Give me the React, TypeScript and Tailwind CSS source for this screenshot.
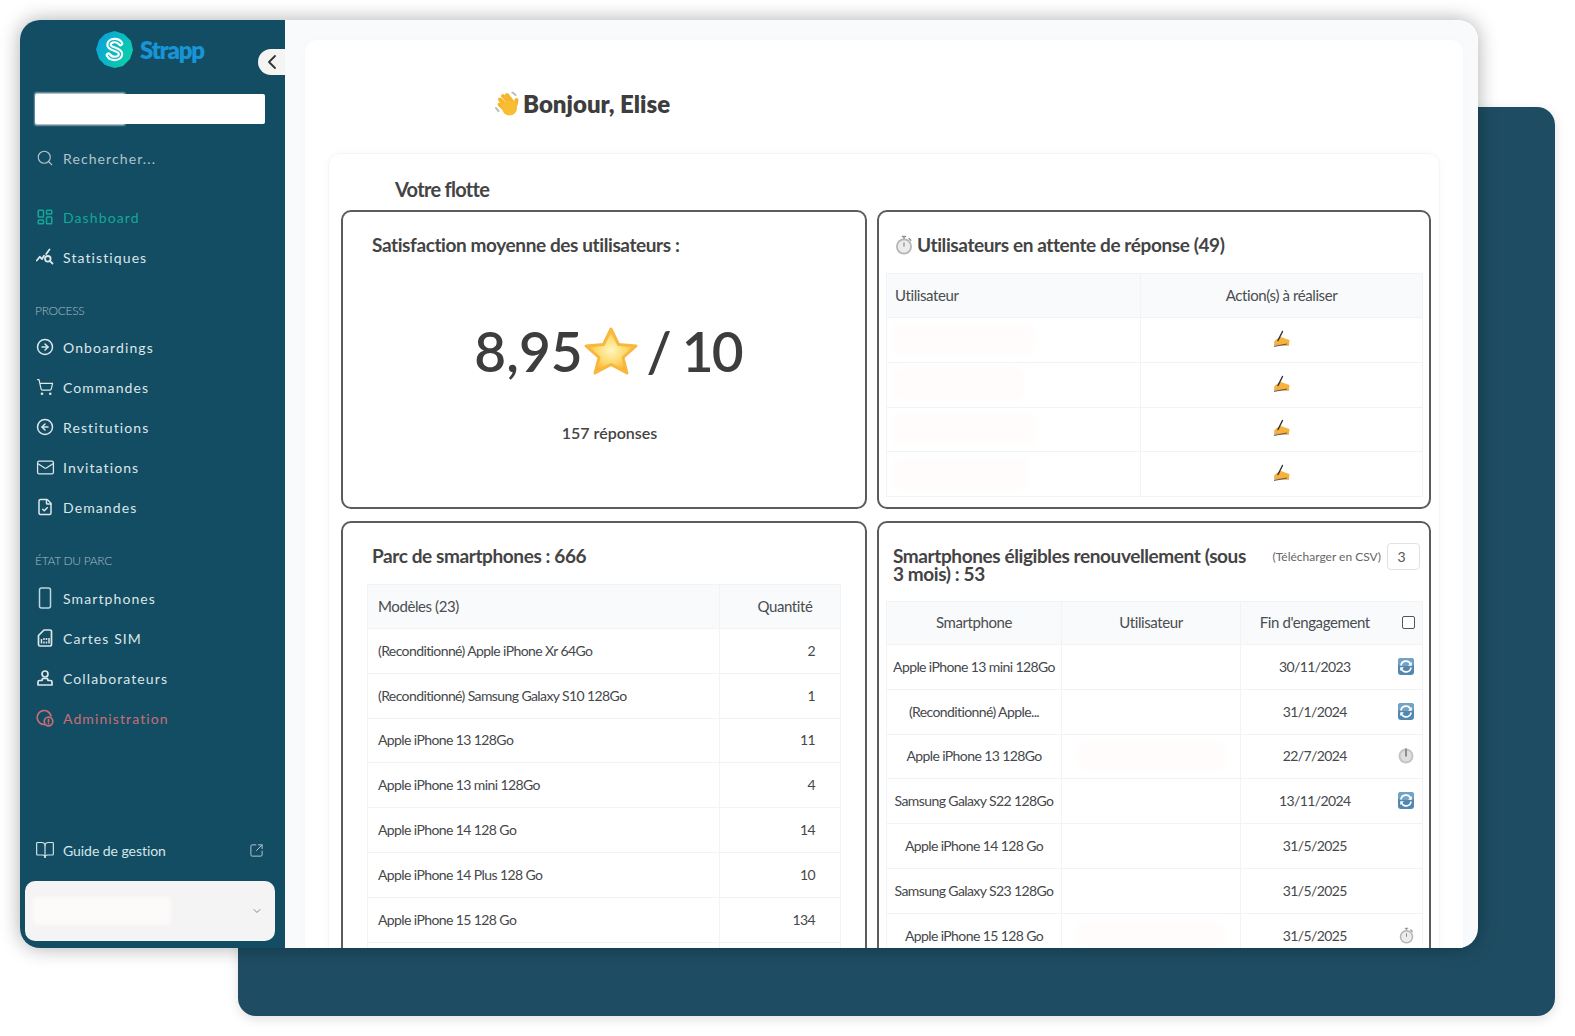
import {
  BookOpen,
  ChevronDown,
  ChevronLeft,
  CircleArrowLeft,
  CircleArrowRight,
  FileCheck,
  LayoutDashboard,
  Mail,
  Search,
  ShoppingCart,
  SquareArrowOutUpRight,
} from "lucide-react";
import type { ReactNode } from "react";

function Logo() {
  const s = "M24.500 12.500c-1.300-2-3.500-3-6.200-2.900-3.200.1-5.300 1.800-5.300 4.100 0 5.300 11.500 3.500 11.500 9.300 0 2.600-2.400 4.400-5.700 4.400-2.900 0-5.100-1.100-6.300-3.200";
  return (
    <svg width="37" height="37" viewBox="0 0 37 37" className="shrink-0">
      <defs>
        <linearGradient id="logoFill" x1="0" y1="0.2" x2="1" y2="0.8">
          <stop offset="0" stopColor="#0aa0dc" />
          <stop offset="1" stopColor="#0bd3a5" />
        </linearGradient>
      </defs>
      <polygon points="18.500,0 28,3 35,10 37,19 34,28 27,35 18.500,37 9,34 3,28 0,18.500 3,9 9,3" fill="url(#logoFill)" />
      <path d={s} fill="none" stroke="#fff" strokeWidth="5.500" strokeLinecap="round" />
      <path d={s} fill="none" stroke="#0cb9bd" strokeWidth="1.300" strokeLinecap="round" />
    </svg>
  );
}

function StatsIcon() {
  return (
    <svg width="18" height="18" viewBox="0 0 18 18" fill="none" stroke="currentColor" strokeWidth="1.800" strokeLinecap="round" strokeLinejoin="round">
      <path d="M0.800 12.500 3.800 8.800 6 11 8 7.800" />
      <path d="M10.200 6 13.500 1.500" />
      <circle cx="11.800" cy="10.800" r="2.800" />
      <path d="M13.800 12.800 16.500 15.500" />
    </svg>
  );
}

function PhoneIcon() {
  return (
    <svg width="18" height="22" viewBox="0 0 18 22" fill="none" stroke="#bcd6de" strokeWidth="1.500">
      <rect x="3.500" y="1" width="11" height="20" rx="2" />
    </svg>
  );
}

function SimIcon() {
  return (
    <svg width="18" height="18" viewBox="0 0 18 18" fill="none" stroke="currentColor" strokeWidth="1.700" strokeLinejoin="round">
      <path d="M8 1h6a1.500 1.500 0 0 1 1.500 1.500v13a1.500 1.500 0 0 1-1.500 1.500H4a1.500 1.500 0 0 1-1.500-1.500V6.500z" />
      <path d="M5.500 10v4.500M8 9v2M8 12.500v2M10.500 9v2M10.500 12.500v2M13 9v5.500" strokeWidth="1.500" />
    </svg>
  );
}

function PersonIcon() {
  return (
    <svg width="18" height="18" viewBox="0 0 18 18" fill="none" stroke="currentColor" strokeWidth="1.700" strokeLinejoin="round">
      <circle cx="9" cy="5" r="3" />
      <path d="M6.500 9.500h5l.5 2h2.500a1.500 1.500 0 0 1 1.500 1.500v3H2v-3a1.500 1.500 0 0 1 1.500-1.500H6z" />
    </svg>
  );
}

function AdminIcon() {
  return (
    <svg width="18" height="18" viewBox="0 0 18 18" fill="none" stroke="#c96d75" strokeWidth="1.700" strokeLinecap="round">
      <path d="M8.500 15.500A7 7 0 1 1 15 7" />
      <circle cx="12.500" cy="12.500" r="4.300" />
      <path d="M12.500 10.500v2.200M12.500 14.500v.1" />
    </svg>
  );
}

function WaveEmoji() {
  return (
    <svg width="28" height="28" viewBox="0 0 28 28" fill="none" strokeLinecap="round" className="shrink-0">
      <path d="M18.500 2.500 21.500 5M2 18l2.500 3" stroke="#bdbdbd" strokeWidth="2" />
      <g stroke="#f5b62e" strokeWidth="4">
        <path d="M6 9.500 13 16.500" />
        <path d="M9 6 15.500 13" />
        <path d="M13 5 18 11.500" />
        <path d="M5.500 14.500 11 19.500" />
        <path d="M22.500 10 21.500 15" />
      </g>
      <circle cx="15.500" cy="18" r="7.500" fill="#f8bd33" />
    </svg>
  );
}

function StarEmoji() {
  return (
    <svg width="56" height="50" viewBox="0 0 56 50" className="shrink-0">
      <defs>
        <radialGradient id="starFill" cx="0.5" cy="0.48" r="0.55">
          <stop offset="0" stopColor="#fff6c0" />
          <stop offset="0.55" stopColor="#fdd868" />
          <stop offset="1" stopColor="#f6a623" />
        </radialGradient>
      </defs>
      <polygon points="28,3 35.500,18.500 53,20 40,31.500 44,47 28,38.500 12,47 16,31.500 3,20 20.500,18.500" fill="url(#starFill)" stroke="#f8b73e" strokeWidth="3" strokeLinejoin="round" />
    </svg>
  );
}

function StopwatchEmoji({ size = 20 }: { size?: number }) {
  return (
    <svg width={size} height={size} viewBox="0 0 20 20" className="shrink-0">
      <path d="M8.500 1.500h3M10 1.500v3M15 3.500l1.800 1.800" stroke="#8f8f8f" strokeWidth="1.400" strokeLinecap="round" />
      <circle cx="10" cy="11.500" r="8" fill="#b5b5b5" />
      <circle cx="10" cy="11.500" r="6.200" fill="#ececec" />
      <path d="M10 11.500V7.500" stroke="#777" strokeWidth="1" />
    </svg>
  );
}

function WritingEmoji() {
  return (
    <svg width="18" height="18" viewBox="0 0 18 18">
      <path d="M1 12c2-2.800 4.500-4.500 7-5l4 1.500 4.500 1.500-.5 4.500H1.500z" fill="#f7b23b" />
      <path d="M1 15h15" stroke="#c9811b" strokeWidth="1" />
      <path d="M9.500 1.500 5 10.500" stroke="#333" strokeWidth="1.400" strokeLinecap="round" />
      <path d="M1 16.500 14 14" stroke="#4b4030" strokeWidth="0.800" />
    </svg>
  );
}

function RefreshEmoji() {
  return (
    <svg width="16" height="17" viewBox="0 0 16 17">
      <rect width="16" height="17" rx="3" fill="#5288b0" />
      <rect width="16" height="8" rx="3" fill="#73a3c4" />
      <path d="M3 7.500A5 5 0 0 1 12.500 6M13 9.500A5 5 0 0 1 3.500 11" stroke="#fff" strokeWidth="1.700" fill="none" />
      <path d="M13.800 4v3.800H10zM2.200 13V9.200H6z" fill="#fff" />
    </svg>
  );
}

function PowerEmoji() {
  return (
    <svg width="16" height="17" viewBox="0 0 16 17">
      <circle cx="8" cy="9" r="7.500" fill="#c4c4c4" />
      <circle cx="8" cy="9" r="5.500" fill="#dedede" />
      <path d="M8 1.500v8" stroke="#8d8d8d" strokeWidth="2" />
    </svg>
  );
}

function Redacted({ className }: { className: string }) {
  return <div className={`rounded-sm bg-[#fffcfb] blur-[3px] ${className}`} />;
}

function NavItem({ icon, label, className = "text-[#dde6e9]" }: { icon: ReactNode; label: string; className?: string }) {
  return (
    <div className={`flex h-10 items-center text-[14px] tracking-[1.100px] ${className}`}>
      <div className="flex w-[28px] items-center pl-px">{icon}</div>
      {label}
    </div>
  );
}

function Sidebar() {
  return (
    <aside className="relative flex w-[265px] shrink-0 flex-col bg-[#134d63] pl-[15px] pr-5">
      <div className="mt-[11px] flex h-[37px] items-center gap-[7px] pl-[61px] text-[#1795d6]">
        <Logo />
        <span className="text-[24px] font-extrabold leading-none tracking-[-1.200px]">Strapp</span>
      </div>
      <div className="absolute right-0 top-[29px] flex h-[26px] w-[27px] items-center justify-center rounded-l-full bg-[#f4f4f3] text-[#333]">
        <ChevronLeft size={24} strokeWidth={1.8} />
      </div>
      <div className="relative mt-[26px] h-[30px] rounded-[2px] bg-white">
        <div className="absolute -inset-y-px left-0 w-[90px] bg-white blur-[1px]" />
      </div>
      <div className="mt-[14px] text-[#b4c3ca]">
        <NavItem icon={<Search size={18} strokeWidth={1.5} />} label="Rechercher..." className="text-[#b4c3ca]" />
      </div>
      <div className="mt-[19px]">
        <NavItem icon={<LayoutDashboard size={18} strokeWidth={2} className="text-[#14a898]" />} label="Dashboard" className="text-[#14a898]" />
        <NavItem icon={<StatsIcon />} label="Statistiques" />
      </div>
      <div className="pb-2 pt-[26px] text-[12px] font-light leading-4 tracking-[-0.3px] text-[#a9bcc5]">PROCESS</div>
      <NavItem icon={<CircleArrowRight size={18} strokeWidth={2} />} label="Onboardings" />
      <NavItem icon={<ShoppingCart size={18} strokeWidth={1.6} />} label="Commandes" />
      <NavItem icon={<CircleArrowLeft size={18} strokeWidth={2} />} label="Restitutions" />
      <NavItem icon={<Mail size={19} strokeWidth={1.6} />} label="Invitations" />
      <NavItem icon={<FileCheck size={18} strokeWidth={2} />} label="Demandes" />
      <div className="pb-[9px] pt-[26px] text-[12px] font-light leading-4 tracking-[-0.3px] text-[#a9bcc5]">ÉTAT DU PARC</div>
      <NavItem icon={<PhoneIcon />} label="Smartphones" />
      <NavItem icon={<SimIcon />} label="Cartes SIM" />
      <NavItem icon={<PersonIcon />} label="Collaborateurs" />
      <NavItem icon={<AdminIcon />} label="Administration" className="text-[#c96d75]" />
      <div className="mt-auto flex h-10 items-center text-[14px] tracking-[-0.05px] text-[#d5e6ea]">
        <div className="flex w-[28px] items-center">
          <BookOpen size={20} strokeWidth={1.4} />
        </div>
        Guide de gestion
        <SquareArrowOutUpRight size={15} strokeWidth={1.5} className="ml-auto mr-px text-[#b7ccd4]" />
      </div>
      <div className="mx-[-10px] mb-[7px] mt-[11px] flex h-[60px] items-center justify-between rounded-[10px] bg-[#f4f4f4] pl-2 pr-3">
        <div className="h-7 w-[138px] rounded bg-[#fdfafa] blur-[2px]" />
        <ChevronDown size={12} className="text-[#888]" />
      </div>
    </aside>
  );
}

const thClass = "border border-[#f1f3f4] bg-[#f8fafb] pb-px font-normal text-[15px] tracking-[-0.4px] text-[#4a4d50]";
const tdClass = "border border-[#f1f3f4] pb-px text-[14px] tracking-[-0.6px] text-[#45484b]";
const cardTitle = "text-[19px] font-bold tracking-[-0.4px] text-[#444]";

function WaitingCard() {
  return (
    <div className="h-[299px] rounded-[10px] border-2 border-[#5c5c5c] px-[7px] pt-[21px]">
      <div className={`mb-4 flex h-6 items-center gap-[3px] pl-2 ${cardTitle}`}>
        <StopwatchEmoji />
        Utilisateurs en attente de réponse (49)
      </div>
      <table className="w-[537px] table-fixed border-collapse">
        <thead>
          <tr className="h-[44px]">
            <th className={`${thClass} w-[254px] pl-2 text-left`}>Utilisateur</th>
            <th className={thClass}>Action(s) à réaliser</th>
          </tr>
        </thead>
        <tbody>
          {["w-[140px]", "w-[130px]", "w-[142px]", "w-[135px]"].map((w) => (
            <tr key={w} className="h-[44.800px]">
              <td className={`${tdClass} pl-[6px]`}>
                <Redacted className={`h-[30px] ${w}`} />
              </td>
              <td className={tdClass}>
                <div className="-mt-px flex justify-center">
                  <WritingEmoji />
                </div>
              </td>
            </tr>
          ))}
        </tbody>
      </table>
    </div>
  );
}

const parc: [string, number][] = [
  ["(Reconditionné) Apple iPhone Xr 64Go", 2],
  ["(Reconditionné) Samsung Galaxy S10 128Go", 1],
  ["Apple iPhone 13 128Go", 11],
  ["Apple iPhone 13 mini 128Go", 4],
  ["Apple iPhone 14 128 Go", 14],
  ["Apple iPhone 14 Plus 128 Go", 10],
  ["Apple iPhone 15 128 Go", 134],
];

function ParcCard() {
  return (
    <div className="h-[500px] rounded-[10px] border-2 border-[#5c5c5c] pl-6 pt-[21px]">
      <div className={`mb-4 flex h-6 items-center pl-[5px] ${cardTitle}`}>Parc de smartphones : 666</div>
      <table className="w-[474px] table-fixed border-collapse">
        <thead>
          <tr className="h-[44px]">
            <th className={`${thClass} w-[352px] pl-[10px] text-left`}>Modèles (23)</th>
            <th className={`${thClass} pl-[10px]`}>Quantité</th>
          </tr>
        </thead>
        <tbody>
          {parc.map(([model, qty]) => (
            <tr key={model} className="h-[44.800px]">
              <td className={`${tdClass} pl-[10px]`}>{model}</td>
              <td className={`${tdClass} pr-[25px] text-right`}>{qty}</td>
            </tr>
          ))}
          <tr className="h-[45px]">
            <td className={tdClass} />
            <td className={tdClass} />
          </tr>
        </tbody>
      </table>
    </div>
  );
}

type Renewal = { phone: string; date: string; icon?: ReactNode; redacted?: boolean };

const renewals: Renewal[] = [
  { phone: "Apple iPhone 13 mini 128Go", date: "30/11/2023", icon: <RefreshEmoji /> },
  { phone: "(Reconditionné) Apple...", date: "31/1/2024", icon: <RefreshEmoji /> },
  { phone: "Apple iPhone 13 128Go", date: "22/7/2024", icon: <PowerEmoji />, redacted: true },
  { phone: "Samsung Galaxy S22 128Go", date: "13/11/2024", icon: <RefreshEmoji /> },
  { phone: "Apple iPhone 14 128 Go", date: "31/5/2025" },
  { phone: "Samsung Galaxy S23 128Go", date: "31/5/2025" },
  { phone: "Apple iPhone 15 128 Go", date: "31/5/2025", icon: <StopwatchEmoji size={17} />, redacted: true },
];

function RenewalCard() {
  return (
    <div className="h-[500px] rounded-[10px] border-2 border-[#5c5c5c] px-[7px] pt-6">
      <div className="mb-[18px] flex items-start pl-[7px]">
        <div className={`w-[358px] leading-[18px] ${cardTitle}`}>
          Smartphones éligibles renouvellement (sous 3 mois) : 53
        </div>
        <div className="-mt-1 ml-auto mr-[2px] flex items-center gap-1.5 text-[12px] text-[#666]">
          (Télécharger en CSV)
          <div className="flex h-[27px] w-[33px] items-center justify-center rounded border border-[#e2e2e2] pr-1 text-[14px] text-[#555]">3</div>
        </div>
      </div>
      <table className="w-[537px] table-fixed border-collapse">
        <thead>
          <tr className="h-[43px]">
            <th className={`${thClass} w-[175px]`}>Smartphone</th>
            <th className={`${thClass} w-[179px]`}>Utilisateur</th>
            <th className={`${thClass} w-[148px] border-r-0`}>Fin d'engagement</th>
            <th className={`${thClass} border-l-0`}>
              <div className="flex justify-center pl-[6px]">
                <div className="h-[13px] w-[13px] rounded-[2px] border border-[#555] bg-white" />
              </div>
            </th>
          </tr>
        </thead>
        <tbody>
          {renewals.map((r) => (
            <tr key={r.phone} className="h-[44.800px]">
              <td className={`${tdClass} text-center`}>{r.phone}</td>
              <td className={tdClass}>
                {r.redacted && <Redacted className="mx-auto h-[26px] w-[145px]" />}
              </td>
              <td className={`${tdClass} border-r-0 text-center`}>{r.date}</td>
              <td className={`${tdClass} border-l-0`}>
                <div className="flex justify-center pl-[2px]">{r.icon}</div>
              </td>
            </tr>
          ))}
        </tbody>
      </table>
    </div>
  );
}

export default function App() {
  return (
    <div className="relative h-[1036px] w-[1575px] overflow-hidden bg-white font-[Lato,sans-serif]">
      <div className="absolute left-[238px] top-[107px] h-[909px] w-[1317px] rounded-[18px] bg-[#1e4d63] shadow-[0_3px_12px_rgba(0,0,0,0.12)]" />
      <div className="absolute left-[20px] top-[20px] flex h-[928px] w-[1458px] overflow-hidden rounded-[20px] shadow-[0_0_20px_rgba(0,0,0,0.32)]">
        <Sidebar />
        <main className="min-w-0 flex-1 bg-[#f9fafb] pl-5 pr-[15px] pt-5">
          <div className="h-[1100px] rounded-xl bg-white px-[23px] pt-[48px] shadow-[0_0_6px_rgba(0,0,0,0.02)]">
            <div className="flex h-8 items-center gap-px pl-[166px] text-[24px] font-extrabold text-[#3d3d3d]">
              <WaveEmoji />
              Bonjour, Elise
            </div>
            <section className="mt-[33px] rounded-xl border border-[#f5f5f5] pb-4 pl-3 pr-2 pt-[21px] shadow-[0_0_8px_rgba(0,0,0,0.03)]">
              <h2 className="mb-[7px] h-7 pl-[54px] text-[20px] font-bold leading-7 tracking-[-0.7px] text-[#444]">Votre flotte</h2>
              <div className="grid grid-cols-[526px_554px] gap-x-[10px] gap-y-3">
                <div className="flex h-[299px] flex-col rounded-[10px] border-2 border-[#5c5c5c] pt-[21px] text-[#444]">
                  <div className={`h-6 pl-[29px] leading-6 ${cardTitle}`}>Satisfaction moyenne des utilisateurs :</div>
                  <div className="mt-[58px] flex h-[72px] items-center justify-center pl-2 text-[55px] font-semibold text-[#3d3d3d]">
                    8,95
                    <StarEmoji />
                    <span className="-ml-1 whitespace-pre tracking-[-1.900px]"> / 10</span>
                  </div>
                  <div className="mt-[34px] pl-[11px] text-center text-[16px] font-semibold leading-6">157 réponses</div>
                </div>
                <WaitingCard />
                <ParcCard />
                <RenewalCard />
              </div>
            </section>
          </div>
        </main>
      </div>
    </div>
  );
}
